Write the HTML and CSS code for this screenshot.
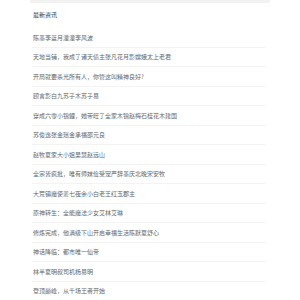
FILE: index.html
```html
<!DOCTYPE html>
<html lang="zh-CN">
<head>
<meta charset="utf-8">
<link rel="stylesheet" href="styles.css">
</head>
<body>
<div class="panel">
  <div class="top-bar"></div>
  <div class="head">最新资讯</div>
  <ul class="news">
    <li>陈墨李蓝月潼潼李风波</li>
    <li>天地当铺，我成了诸天债主张凡花月影嫦娥太上老君</li>
    <li>开局就要杀光所有人，你管这叫精神良好?</li>
    <li>顾言影白九苏子木苏子易</li>
    <li>穿成六零小锦鲤，她带旺了全家木锦赵梅石桂花木建国</li>
    <li>苏俊逸张金瑶金承福邵元良</li>
    <li>赵牧夏家大小姐吴慧赵远山</li>
    <li>全宗皆疯批，唯有师妹俭受宠严辞墨庆北晚宋安牧</li>
    <li>大荒镇魔使姜七夜余小白老王红玉郡主</li>
    <li>原神转生：全能魔法少女艾林艾琳</li>
    <li>修炼完成，他满级下山开启幸福生活陈默夏舒心</li>
    <li>神话降临：都市唯一仙帝</li>
    <li>林半夏明叔司机杨易明</li>
    <li>登顶巅峰，从千场王者开始</li>
  </ul>
</div>
</body>
</html>
```
FILE: styles.css
```css
html, body {
  margin: 0;
  padding: 0;
  background: #fff;
}
body {
  font-family: "Noto Sans CJK SC", "Noto Sans", sans-serif;
}
.panel {
  width: 240px;
  margin: 0 auto;
}
.top-bar {
  height: 3px;
  background: #f2f2f2;
}
.head {
  height: 22px;
  padding: 0 0 3px 3px;
  display: flex;
  align-items: center;
  font-size: 6px;
  color: #333;
}
.news {
  list-style: none;
  margin: 0 4px 0 2px;
  padding: 0;
}
.news li {
  height: 18.5px;
  border-bottom: 1px solid #f3f3f3;
  display: flex;
  align-items: center;
  padding-left: 1px;
  font-size: 6px;
  color: #666;
  white-space: nowrap;
}
```
